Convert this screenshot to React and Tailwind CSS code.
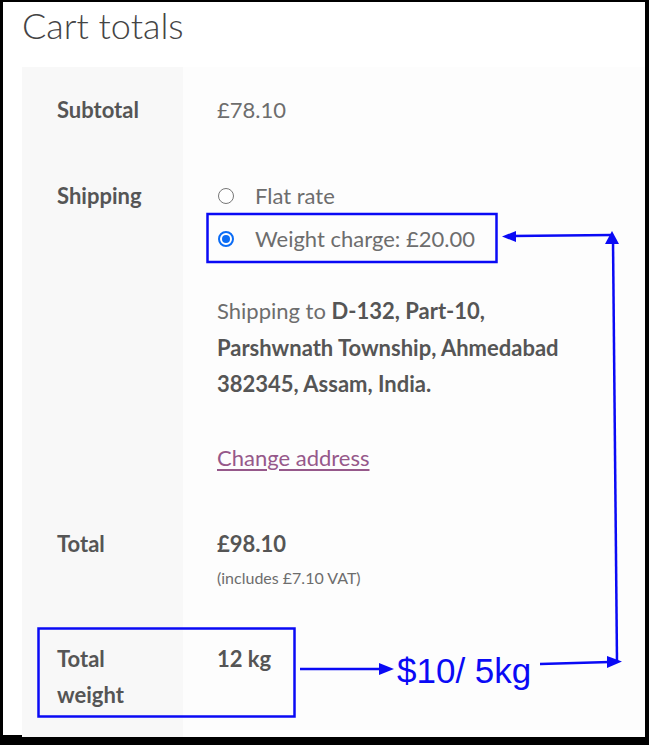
import React from "react";

// Cart totals table, with the blue annotations drawn on top.
const LABEL = "font-bold text-[#555555]";

function Radio({ checked }) {
  return checked ? (
    <span className="flex h-[16px] w-[16px] items-center justify-center rounded-full border-2 border-[#0b6cf5] bg-white">
      <span className="h-[8px] w-[8px] rounded-full bg-[#0b6cf5]" />
    </span>
  ) : (
    <span className="h-[16px] w-[16px] rounded-full border border-[#777777] bg-white" />
  );
}

function Annotations() {
  const blue = "#0a0af5";
  return (
    <svg
      className="pointer-events-none absolute left-0 top-0"
      width="649"
      height="745"
      viewBox="0 0 649 745"
    >
      <rect x="207.5" y="214" width="289" height="48" fill="none" stroke={blue} strokeWidth="2.5" />
      <rect x="38.5" y="628.5" width="256" height="88" fill="none" stroke={blue} strokeWidth="2.5" />
      {/* top arrow back to the weight charge */}
      <line x1="512" y1="236" x2="612" y2="235" stroke={blue} strokeWidth="2.5" />
      <polygon points="502,236.5 516,231 516,242" fill={blue} />
      <line x1="613" y1="240" x2="617" y2="662" stroke={blue} strokeWidth="2.5" />
      <polygon points="612,231 605,244 619,244" fill={blue} />
      {/* weight -> rate */}
      <line x1="300" y1="669" x2="382" y2="669" stroke={blue} strokeWidth="2.5" />
      <polygon points="394,669 379,663 379,675" fill={blue} />
      <text
        x="397"
        y="683"
        fill={blue}
        fontSize="35"
        fontFamily="'Liberation Sans', Arial, sans-serif"
      >
        $10/ 5kg
      </text>
      {/* rate -> up */}
      <line x1="540" y1="664" x2="610" y2="662" stroke={blue} strokeWidth="2.5" />
      <polygon points="622,661.5 607,656 607,668" fill={blue} />
    </svg>
  );
}

export default function App() {
  return (
    <div className="relative h-[745px] w-[649px] bg-black pl-[3px] pt-[2px] font-['Lato',sans-serif]">
      <div className="h-[733px] w-[642px] bg-white">
        <h2 className="pl-[19px] pt-[1px] text-[36px] font-light leading-[44px] text-[#444444]">
          Cart totals
        </h2>
        <table className="ml-[19px] mt-[20px] w-[623px] border-collapse text-[22px] leading-[36px] text-[#6d6d6d]">
          <tbody>
            <tr>
              <th className={`w-[161px] bg-[#f8f8f8] py-[25px] pl-[35px] text-left align-top ${LABEL}`}>
                Subtotal
              </th>
              <td className="bg-[#fdfdfd] py-[25px] pl-[34px] align-top">£78.10</td>
            </tr>
            <tr>
              <th className={`bg-[#f8f8f8] py-[25px] pl-[35px] text-left align-top ${LABEL}`}>
                Shipping
              </th>
              <td className="bg-[#fdfdfd] py-[25px] pl-[34px] align-top">
                <ul className="flex flex-col gap-[7px]">
                  <li className="flex items-center gap-[21px] pl-[1px]">
                    <Radio />
                    <span>Flat rate</span>
                  </li>
                  <li className="flex items-center gap-[21px] pl-[1px]">
                    <Radio checked />
                    <span>Weight charge: £20.00</span>
                  </li>
                </ul>
                <p className="mt-[36px] leading-[36.5px]">
                  Shipping to <strong className="font-bold text-[#555555]">D-132, Part-10,</strong>
                  <br />
                  <strong className="font-bold text-[#555555]">Parshwnath Township, Ahmedabad</strong>
                  <br />
                  <strong className="font-bold text-[#555555]">382345, Assam, India.</strong>
                </p>
                <a
                  href="#"
                  className="mt-[37px] block w-fit text-[#96588a] underline underline-offset-[3px]"
                >
                  Change address
                </a>
              </td>
            </tr>
            <tr>
              <th className={`bg-[#f8f8f8] pb-[22px] pl-[35px] pt-[25px] text-left align-top ${LABEL}`}>
                Total
              </th>
              <td className="bg-[#fdfdfd] pb-[22px] pl-[34px] pt-[25px] align-top">
                <strong className="block font-bold text-[#555555]">£98.10</strong>
                <small className="block text-[16px] leading-[32px]">(includes £7.10 VAT)</small>
              </td>
            </tr>
            <tr>
              <th className={`w-[161px] bg-[#f8f8f8] pb-[24px] pl-[35px] pr-[40px] pt-[25px] text-left align-top ${LABEL}`}>
                Total weight
              </th>
              <td className="bg-[#fdfdfd] pb-[24px] pl-[34px] pt-[25px] align-top font-bold text-[#555555]">
                12 kg
              </td>
            </tr>
          </tbody>
        </table>
      </div>
      <Annotations />
    </div>
  );
}
